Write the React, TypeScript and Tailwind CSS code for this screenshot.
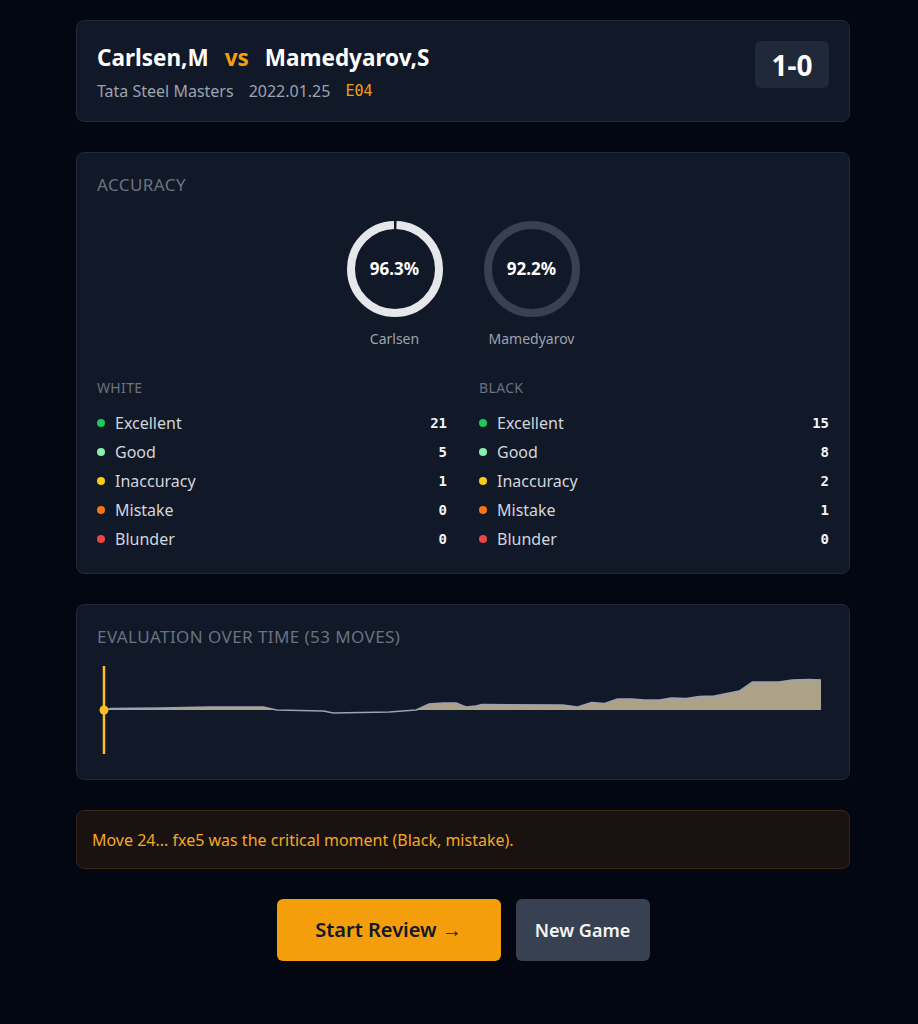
import React from 'react'

const FONT = { fontFamily: '"Noto Sans", "Open Sans", sans-serif' }
const MONO = { fontFamily: '"DejaVu Sans Mono", "Liberation Mono", monospace' }

const CATEGORIES = [
  { label: 'Excellent', dot: 'bg-[#22c55e]' },
  { label: 'Good', dot: 'bg-[#86efac]' },
  { label: 'Inaccuracy', dot: 'bg-[#facc15]' },
  { label: 'Mistake', dot: 'bg-[#f97316]' },
  { label: 'Blunder', dot: 'bg-[#ef4444]' },
]

const WHITE_COUNTS = [21, 5, 1, 0, 0]
const BLACK_COUNTS = [15, 8, 2, 1, 0]

// eval curve, page coords (x, y); baseline is y=709
const EVAL_POINTS: [number, number][] = [
  [103, 709], [110, 707.5], [160, 707], [209, 706], [263, 706], [276, 709], [323, 710],
  [333, 712], [389, 711], [416, 709], [429, 703], [443, 702], [456, 702], [466, 706],
  [476, 705], [482, 703.5], [563, 704], [578, 706], [592, 701.5], [605, 702.5],
  [618, 698], [632, 698], [645, 699], [660, 699], [672, 697], [687, 697.5], [700, 695.5],
  [715, 695], [740, 690], [753, 681], [780, 681], [793, 679], [810, 678.5], [822, 679],
]

function Ring({ pct, color, label, gap }: { pct: number; color: string; label: string; gap: number }) {
  const r = 44
  const c = 2 * Math.PI * r
  return (
    <div className="flex flex-col items-center w-24">
      <div className="relative w-24 h-24">
        <svg width="96" height="96" viewBox="0 0 96 96" className="-rotate-90">
          <circle
            cx="48"
            cy="48"
            r={r}
            fill="none"
            stroke={color}
            strokeWidth="8"
            strokeDasharray={`${c - gap} ${c}`}
            strokeDashoffset={-gap / 2}
          />
        </svg>
        <div className="absolute inset-0 flex items-center justify-center text-white font-bold text-[17px]">
          {pct}%
        </div>
      </div>
      <div className="mt-3 text-sm text-[#9ca3af] whitespace-nowrap">{label}</div>
    </div>
  )
}

function StatColumn({ title, counts }: { title: string; counts: number[] }) {
  return (
    <div>
      <div className="text-sm tracking-wide text-[#6b7280] leading-5">{title}</div>
      <div className="mt-[10px]">
        {CATEGORIES.map((cat, i) => (
          <div key={cat.label} className="flex items-center h-[29px]">
            <span className={`w-2 h-2 rounded-full ${cat.dot}`} />
            <span className="ml-2.5 text-base text-[#d1d5db]">{cat.label}</span>
            <span className="ml-auto text-sm font-bold text-[#f3f4f6]" style={MONO}>
              {counts[i]}
            </span>
          </div>
        ))}
      </div>
    </div>
  )
}

function EvalChart() {
  const pts = EVAL_POINTS.map(([x, y]) => [x - 96, y - 665] as [number, number])
  const line = pts.map(([x, y], i) => `${i ? 'L' : 'M'}${x} ${y}`).join(' ')
  const clipped = pts.map(([x, y]) => [x, Math.min(y, 44)])
  const area =
    `M${clipped[0][0]} 44 ` +
    clipped.map(([x, y]) => `L${x} ${y}`).join(' ') +
    ` L${clipped[clipped.length - 1][0]} 44 Z`
  return (
    <svg viewBox="0 0 734 88" className="w-full h-[88px] block" preserveAspectRatio="none">
      <path d={area} fill="#ada18a" />
      <path d={line} fill="none" stroke="#9aa3b2" strokeWidth="1.5" strokeLinejoin="round" />
      <line x1="7" y1="0" x2="7" y2="88" stroke="#fbbf24" strokeWidth="2.5" />
      <circle cx="7" cy="44" r="4.5" fill="#fbbf24" />
    </svg>
  )
}

export default function App() {
  return (
    <div className="min-h-screen bg-[#030712] pt-5 pb-10 pl-2" style={FONT}>
      <div className="w-[774px] mx-auto flex flex-col gap-[30px]">
        {/* header */}
        <div className="bg-[#111827] border border-[#1f2937] rounded-lg p-5 flex items-start justify-between">
          <div>
            <div className="flex items-center h-[33px] text-[22.5px] font-bold text-white">
              <span>Carlsen,M</span>
              <span className="mx-4 text-[#f59e0b]">vs</span>
              <span>Mamedyarov,S</span>
            </div>
            <div className="mt-[7px] flex items-center gap-[15px] text-base leading-5 text-[#9ca3af]">
              <span>Tata Steel Masters</span>
              <span>2022.01.25</span>
              <span className="text-[#f59e0b] text-[15px]" style={MONO}>E04</span>
            </div>
          </div>
          <div className="w-[74px] h-[47px] rounded-md bg-[#1f2937] flex items-center justify-center text-[28px] font-bold text-white">
            1-0
          </div>
        </div>

        {/* accuracy */}
        <div className="bg-[#111827] border border-[#1f2937] rounded-lg px-5 pt-5 pb-5">
          <div className="text-[17px] leading-6 tracking-wide text-[#6b7280]">ACCURACY</div>
          <div className="mt-[24px] flex justify-center gap-[41px]">
            <Ring pct={96.3} color="#e5e7eb" label="Carlsen" gap={3} />
            <Ring pct={92.2} color="#374151" label="Mamedyarov" gap={0} />
          </div>
          <div className="mt-[29px] grid grid-cols-2 gap-8">
            <StatColumn title="WHITE" counts={WHITE_COUNTS} />
            <StatColumn title="BLACK" counts={BLACK_COUNTS} />
          </div>
        </div>

        {/* evaluation */}
        <div className="bg-[#111827] border border-[#1f2937] rounded-lg px-5 pt-5 pb-[25px]">
          <div className="text-[17px] leading-6 tracking-wide text-[#6b7280]">
            EVALUATION OVER TIME (53 MOVES)
          </div>
          <div className="mt-[17px]">
            <EvalChart />
          </div>
        </div>

        {/* critical moment */}
        <div className="h-[59px] rounded-lg border border-[#3b2410] bg-[#1a1210] px-[15px] flex items-center text-base text-[#f4a823]">
          Move 24... fxe5 was the critical moment (Black, mistake).
        </div>

        {/* actions */}
        <div className="flex justify-center gap-[15px]">
          <button className="w-[224px] h-[62px] rounded-md bg-[#f59e0b] text-[#111827] text-xl font-semibold">
            Start Review →
          </button>
          <button className="w-[134px] h-[62px] rounded-md bg-[#374151] text-[#f3f4f6] text-lg font-semibold">
            New Game
          </button>
        </div>
      </div>
    </div>
  )
}
